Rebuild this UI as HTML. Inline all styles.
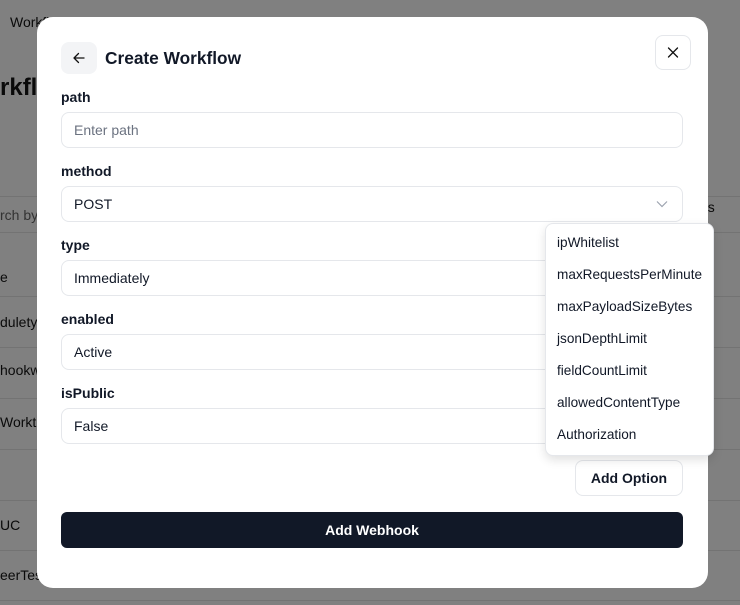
<!DOCTYPE html>
<html><head><style>
*{box-sizing:border-box;margin:0;padding:0}
body{width:740px;height:605px;overflow:hidden;position:relative;background:#808080;font-family:"Liberation Sans",sans-serif;color:#111}
.bg{position:absolute;color:#0a0a0a;font-size:14px}
.ln{position:absolute;left:0;width:740px;height:1px;background:#737373}
.modal{position:absolute;left:37px;top:17px;width:671px;height:571px;background:#fff;border-radius:16px}
.lbl{position:absolute;left:24px;font-size:14px;font-weight:bold;color:#111827}
.inp{position:absolute;left:24px;width:622px;height:36px;border:1px solid #e5e7eb;border-radius:8px;font-size:14px;padding:9px 12px;color:#111827}
.btn{position:absolute;border:1px solid #e5e7eb;border-radius:8px;background:#fff}
.dd{position:absolute;left:545px;top:223px;width:169px;height:233px;background:#fff;border:1px solid #e5e7eb;border-radius:8px;box-shadow:0 4px 10px rgba(0,0,0,.12);padding-top:10px}
.dd div{height:32px;padding-left:11px;font-size:13.6px;color:#111827;line-height:18px}
</style></head><body>
<div class="bg" style="left:10px;top:14px">Workflows</div>
<div class="bg" style="left:0;top:74px;font-size:24px;font-weight:bold">rkflows</div>
<div class="ln" style="top:196px"></div><div class="ln" style="top:232px"></div>
<div class="ln" style="top:296px"></div><div class="ln" style="top:347px"></div>
<div class="ln" style="top:398px"></div><div class="ln" style="top:449px"></div>
<div class="ln" style="top:500px"></div><div class="ln" style="top:550px"></div><div class="ln" style="top:600px"></div>
<div class="bg" style="left:0;top:207px;color:#333">rch by</div>
<div class="bg" style="left:700px;top:199px">us</div>
<div class="bg" style="left:0;top:269px">e</div>
<div class="bg" style="left:0;top:314px">dulety</div>
<div class="bg" style="left:0;top:362px">hookw</div>
<div class="bg" style="left:0;top:414px">Workt</div>
<div class="bg" style="left:0;top:517px">UC</div>
<div class="bg" style="left:0;top:567px">eerTest</div>
<div class="modal">
 <div class="btn" style="left:24px;top:25px;width:36px;height:32px;background:#f3f4f6;border:none">
  <svg width="36" height="32" viewBox="0 0 36 32"><path d="M23 16H13M17.5 11.5L13 16l4.5 4.5" stroke="#111" stroke-width="1.3" fill="none" stroke-linecap="round" stroke-linejoin="round"/></svg></div>
 <div style="position:absolute;left:68px;top:31px;font-size:17.3px;font-weight:bold;color:#111827">Create Workflow</div>
 <div class="btn" style="left:618px;top:18px;width:36px;height:35px">
  <svg width="34" height="33" viewBox="0 0 34 33"><path d="M12.5 12l9 9M21.5 12l-9 9" stroke="#111" stroke-width="1.3" stroke-linecap="round"/></svg></div>
 <div class="lbl" style="top:72px">path</div>
 <div class="inp" style="top:95px;color:#6b7280">Enter path</div>
 <div class="lbl" style="top:146px">method</div>
 <div class="inp" style="top:169px">POST<svg style="position:absolute;right:14px;top:13px" width="12" height="8" viewBox="0 0 12 8"><path d="M1 1.5l5 5 5-5" stroke="#9ca3af" stroke-width="1.2" fill="none"/></svg></div>
 <div class="lbl" style="top:220px">type</div>
 <div class="inp" style="top:243px">Immediately</div>
 <div class="lbl" style="top:294px">enabled</div>
 <div class="inp" style="top:317px">Active</div>
 <div class="lbl" style="top:368px">isPublic</div>
 <div class="inp" style="top:391px">False</div>
 <div class="btn" style="left:538px;top:443px;width:108px;height:36px;font-size:14px;font-weight:bold;text-align:center;line-height:34px;color:#111827">Add Option</div>
 <div style="position:absolute;left:24px;top:495px;width:622px;height:36px;background:#111827;border-radius:6px;color:#fff;font-size:14px;font-weight:bold;text-align:center;line-height:36px">Add Webhook</div>
</div>
<div class="dd"><div>ipWhitelist</div><div>maxRequestsPerMinute</div><div>maxPayloadSizeBytes</div><div>jsonDepthLimit</div><div>fieldCountLimit</div><div>allowedContentType</div><div>Authorization</div></div>
</body></html>
